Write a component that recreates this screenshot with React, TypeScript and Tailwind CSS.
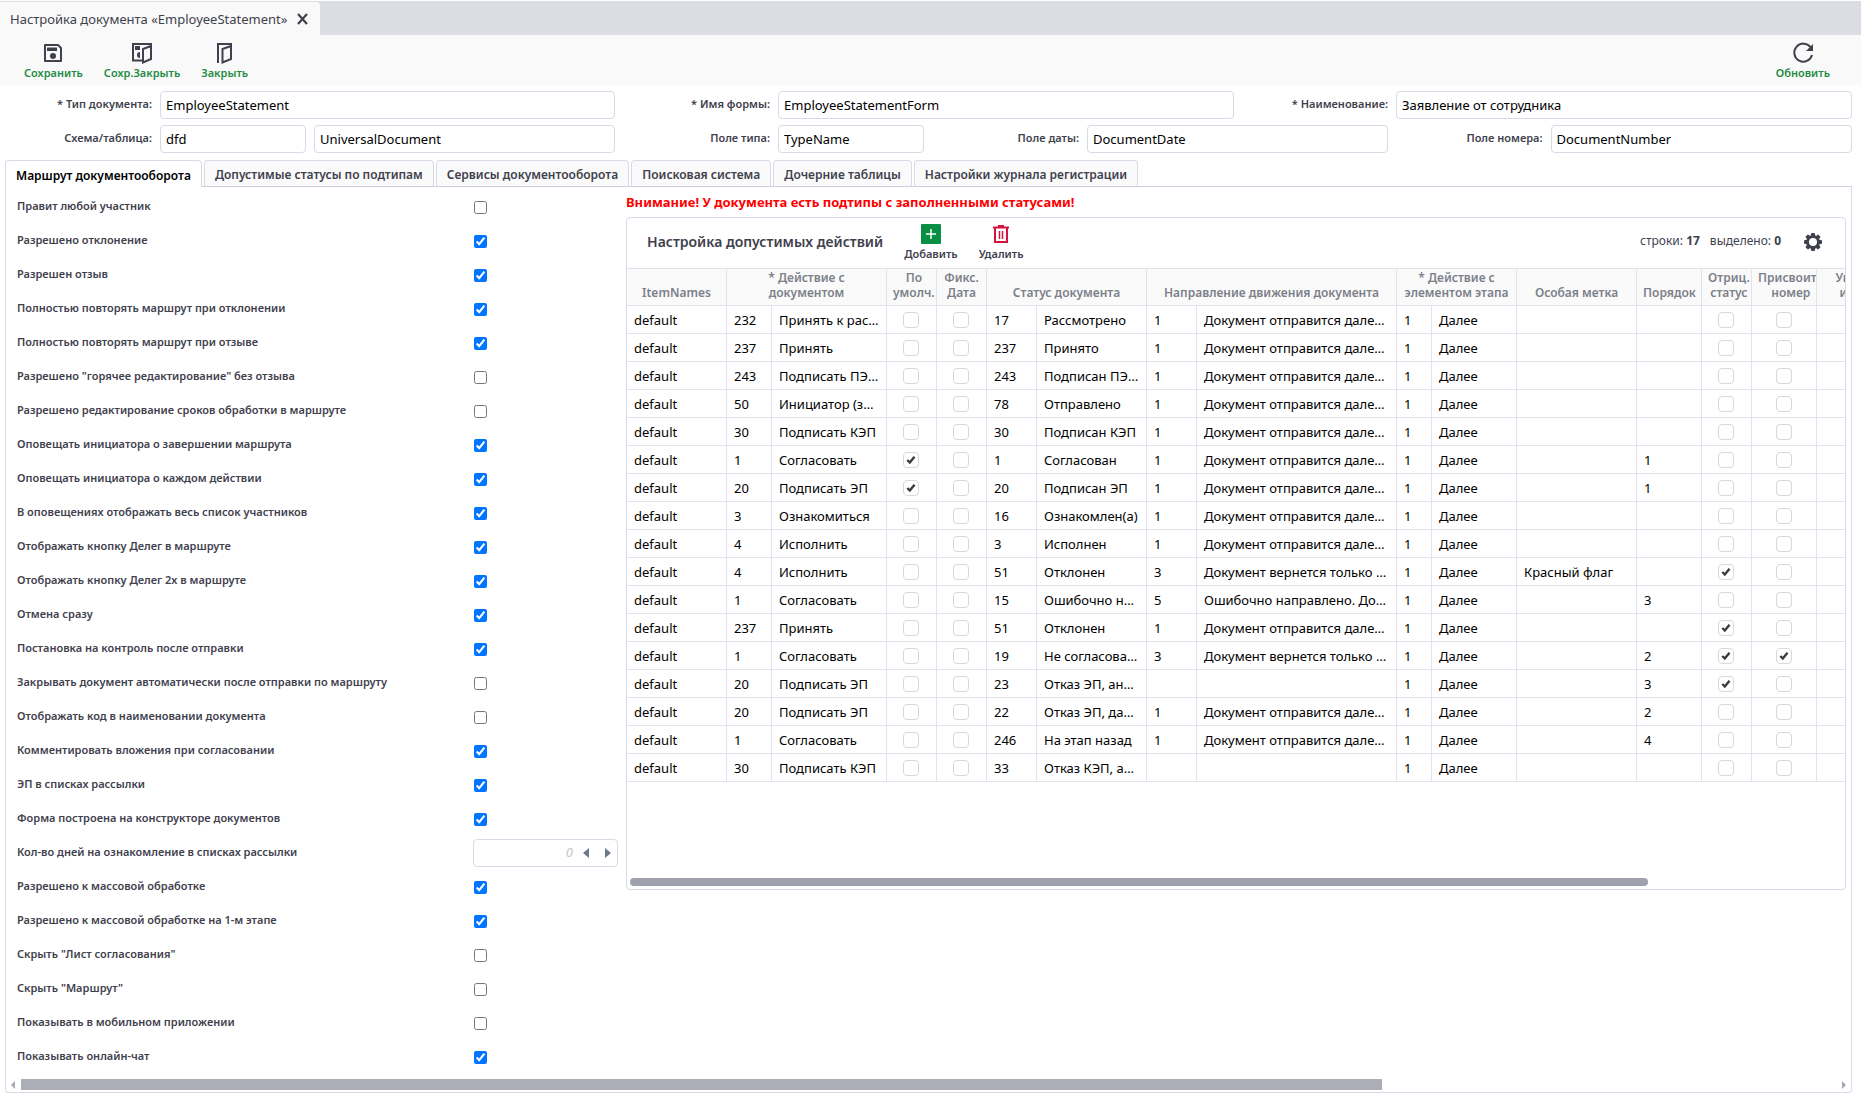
import React from "react";

const SETTINGS: { label: string; checked?: boolean; spinner?: boolean }[] = [
  { label: "Правит любой участник" },
  { label: "Разрешено отклонение", checked: true },
  { label: "Разрешен отзыв", checked: true },
  { label: "Полностью повторять маршрут при отклонении", checked: true },
  { label: "Полностью повторять маршрут при отзыве", checked: true },
  { label: 'Разрешено "горячее редактирование" без отзыва' },
  { label: "Разрешено редактирование сроков обработки в маршруте" },
  { label: "Оповещать инициатора о завершении маршрута", checked: true },
  { label: "Оповещать инициатора о каждом действии", checked: true },
  { label: "В оповещениях отображать весь список участников", checked: true },
  { label: "Отображать кнопку Делег в маршруте", checked: true },
  { label: "Отображать кнопку Делег 2х в маршруте", checked: true },
  { label: "Отмена сразу", checked: true },
  { label: "Постановка на контроль после отправки", checked: true },
  { label: "Закрывать документ автоматически после отправки по маршруту" },
  { label: "Отображать код в наименовании документа" },
  { label: "Комментировать вложения при согласовании", checked: true },
  { label: "ЭП в списках рассылки", checked: true },
  { label: "Форма построена на конструкторе документов", checked: true },
  { label: "Кол-во дней на ознакомление в списках рассылки", spinner: true },
  { label: "Разрешено к массовой обработке", checked: true },
  { label: "Разрешено к массовой обработке на 1-м этапе", checked: true },
  { label: 'Скрыть "Лист согласования"' },
  { label: 'Скрыть "Маршрут"' },
  { label: "Показывать в мобильном приложении" },
  { label: "Показывать онлайн-чат", checked: true },
];

const FORWARD = "Документ отправится далее по маршруту";
const BACK = "Документ вернется только инициатору";

type Row = {
  action: [string, string];
  byDefault?: boolean;
  status: [string, string];
  direction: [string, string];
  mark?: string;
  order?: string;
  negative?: boolean;
  number?: boolean;
};

const ROWS: Row[] = [
  { action: ["232", "Принять к рассмотрению"], status: ["17", "Рассмотрено"], direction: ["1", FORWARD] },
  { action: ["237", "Принять"], status: ["237", "Принято"], direction: ["1", FORWARD] },
  { action: ["243", "Подписать ПЭП (СМС)"], status: ["243", "Подписан ПЭП (СМС)"], direction: ["1", FORWARD] },
  { action: ["50", "Инициатор (заявитель)"], status: ["78", "Отправлено"], direction: ["1", FORWARD] },
  { action: ["30", "Подписать КЭП"], status: ["30", "Подписан КЭП"], direction: ["1", FORWARD] },
  { action: ["1", "Согласовать"], byDefault: true, status: ["1", "Согласован"], direction: ["1", FORWARD], order: "1" },
  { action: ["20", "Подписать ЭП"], byDefault: true, status: ["20", "Подписан ЭП"], direction: ["1", FORWARD], order: "1" },
  { action: ["3", "Ознакомиться"], status: ["16", "Ознакомлен(а)"], direction: ["1", FORWARD] },
  { action: ["4", "Исполнить"], status: ["3", "Исполнен"], direction: ["1", FORWARD] },
  { action: ["4", "Исполнить"], status: ["51", "Отклонен"], direction: ["3", BACK], mark: "Красный флаг", negative: true },
  { action: ["1", "Согласовать"], status: ["15", "Ошибочно направлено"], direction: ["5", "Ошибочно направлено. Документ вернется"], order: "3" },
  { action: ["237", "Принять"], status: ["51", "Отклонен"], direction: ["1", FORWARD], negative: true },
  { action: ["1", "Согласовать"], status: ["19", "Не согласовано"], direction: ["3", BACK], order: "2", negative: true, number: true },
  { action: ["20", "Подписать ЭП"], status: ["23", "Отказ ЭП, аннулирован"], direction: ["", ""], order: "3", negative: true },
  { action: ["20", "Подписать ЭП"], status: ["22", "Отказ ЭП, далее"], direction: ["1", FORWARD], order: "2" },
  { action: ["1", "Согласовать"], status: ["246", "На этап назад"], direction: ["1", FORWARD], order: "4" },
  { action: ["30", "Подписать КЭП"], status: ["33", "Отказ КЭП, аннулирован"], direction: ["", ""] },
];

const TABS = [
  "Маршрут документооборота",
  "Допустимые статусы по подтипам",
  "Сервисы документооборота",
  "Поисковая система",
  "Дочерние таблицы",
  "Настройки журнала регистрации",
];

const TEETH = [0, 45, 90, 135, 180, 225, 270, 315];

function SaveIcon() {
  return (
    <svg width="18" height="20" viewBox="0 0 18 20" fill="none">
      <path d="M1 2h13l3 3v13H1z" stroke="#3f414d" strokeWidth="2" strokeLinejoin="round" />
      <path d="M3 4.500h10v3.500H3z" fill="#3f414d" />
      <circle cx="9" cy="13" r="3" fill="#3f414d" />
    </svg>
  );
}

function SaveCloseIcon() {
  return (
    <svg width="20" height="22" viewBox="0 0 20 22" fill="none">
      <path d="M10 18.500H1V2h18v3" stroke="#3f414d" strokeWidth="2" />
      <path d="M3 4h5v4H3zM8 10v6a3 3 0 0 1 0-6z" fill="#3f414d" />
      <path d="M11 7l8-3v13l-8 3.500z" stroke="#3f414d" strokeWidth="2" />
    </svg>
  );
}

function DoorIcon() {
  return (
    <svg width="15" height="22" viewBox="0 0 15 22" fill="none">
      <path d="M1 21V2h13v3" stroke="#3f414d" strokeWidth="2" />
      <path d="M5.500 7l8.500-3v13l-8.500 3.500z" stroke="#3f414d" strokeWidth="2" />
    </svg>
  );
}

function RefreshIcon() {
  return (
    <svg width="22" height="22" viewBox="0 0 22 22" fill="none">
      <path d="M18.500 5.200A9 9 0 1 0 20 13" stroke="#3f414d" strokeWidth="2" />
      <path d="M21 2v7h-7z" fill="#3f414d" />
    </svg>
  );
}

function GearIcon() {
  return (
    <svg width="18" height="18" viewBox="0 0 18 18">
      <circle cx="9" cy="9" r="5.500" fill="none" stroke="#3f414d" strokeWidth="3" />
      {TEETH.map((a) => (
        <rect key={a} x="7" y="0" width="4" height="4" rx="1" fill="#3f414d" transform={`rotate(${a} 9 9)`} />
      ))}
    </svg>
  );
}

function ToolButton({ icon, label, green }: { icon: React.ReactNode; label: string; green?: boolean }) {
  return (
    <button className="flex flex-col items-center">
      <span className="flex h-6 items-center">{icon}</span>
      <span className={green ? "text-[11px] leading-4 font-semibold text-[#1f8b43]" : "text-[11px] leading-4 font-semibold text-[#3f414d]"}>
        {label}
      </span>
    </button>
  );
}

function Field({ id, label, value, className }: { id: string; label?: string; value: string; className: string }) {
  return (
    <div className={className}>
      {label && (
        <label htmlFor={id} className="w-40 shrink-0 pr-2 pb-0.5 text-right text-[11px] font-semibold">
          {label}
        </label>
      )}
      <input
        id={id}
        aria-label={label ?? "Таблица"}
        defaultValue={value}
        className="h-7 w-full min-w-0 rounded border border-[#d9d9e8] bg-white px-[5px] text-[13px] text-black outline-none"
      />
    </div>
  );
}

function Head({ children, span }: { children: React.ReactNode; span?: number }) {
  return (
    <th
      colSpan={span}
      className="h-[37px] overflow-hidden border-r border-b border-[#e2e3ec] bg-[#fafafa] px-1.5 pb-[5px] align-bottom text-xs leading-[15px] font-semibold whitespace-nowrap text-[#7c808a]"
    >
      <div className="w-max min-w-full text-center">{children}</div>
    </th>
  );
}

function Cell({ children }: { children?: React.ReactNode }) {
  return (
    <td className="h-7 truncate border-r border-b border-[#e2e3ec] px-[7px] text-[13px] leading-5 text-black">{children}</td>
  );
}

function CheckCell({ checked, label }: { checked?: boolean; label: string }) {
  return (
    <td className="h-7 border-r border-b border-[#e2e3ec] pr-px">
      <span className="mx-auto grid size-4 place-items-center">
        <input
          type="checkbox"
          aria-label={label}
          defaultChecked={checked}
          className="peer col-start-1 row-start-1 size-4 appearance-none rounded border border-[#d5dae0] bg-white"
        />
        <svg
          width="10"
          height="10"
          viewBox="0 0 10 10"
          className="pointer-events-none invisible col-start-1 row-start-1 peer-checked:visible"
        >
          <path d="M1.300 5l2.500 2.500L8.500 1.800" fill="none" stroke="#3c3c3c" strokeWidth="2.400" />
        </svg>
      </span>
    </td>
  );
}

export default function App() {
  return (
    <div className="flex min-h-screen flex-col bg-white pt-px font-['Noto_Sans',sans-serif] text-[#3f414d]">
      <div className="flex h-[34px] bg-[#dadde2]">
        <div className="mt-px flex items-center gap-2.5 rounded-tr bg-[#f9f9f9] pr-3 pl-2.5">
          <span className="text-[13px] leading-5">Настройка документа «EmployeeStatement»</span>
          <button aria-label="Закрыть вкладку">
            <svg width="11" height="12" viewBox="0 0 11 12">
              <path d="M1 1l9 10M10 1L1 11" stroke="#3f414d" strokeWidth="2.200" />
            </svg>
          </button>
        </div>
      </div>
      <div className="flex h-[50px] items-start justify-between bg-[#f9f9f9] pt-1.5 pr-[31px] pl-6">
        <div className="flex gap-[21px]">
          <ToolButton icon={<SaveIcon />} label="Сохранить" green />
          <ToolButton icon={<SaveCloseIcon />} label="Сохр.Закрыть" green />
          <ToolButton icon={<DoorIcon />} label="Закрыть" green />
        </div>
        <ToolButton icon={<RefreshIcon />} label="Обновить" green />
      </div>
      <form className="grid grid-cols-12 gap-y-1.5 pt-1.5 pr-[7px]">
        <Field id="type" label="* Тип документа:" value="EmployeeStatement" className="col-span-4 flex items-center pr-[3px]" />
        <Field id="form" label="* Имя формы:" value="EmployeeStatementForm" className="col-span-4 flex items-center pr-0.5" />
        <Field id="name" label="* Наименование:" value="Заявление от сотрудника" className="col-span-4 flex items-center pr-0.5" />
        <Field id="schema" label="Схема/таблица:" value="dfd" className="col-span-2 flex items-center pr-[3px]" />
        <Field id="table" value="UniversalDocument" className="col-span-2 flex items-center pr-[3px] pl-[5px]" />
        <Field id="tname" label="Поле типа:" value="TypeName" className="col-span-2 flex items-center pr-[3px]" />
        <Field id="tdate" label="Поле даты:" value="DocumentDate" className="col-span-3 flex items-center pr-[3px]" />
        <Field id="tnum" label="Поле номера:" value="DocumentNumber" className="col-span-3 flex items-center pr-0.5" />
      </form>
      <div className="mt-[7px] mr-[9px] ml-[5px] flex gap-0.5 border-b border-[#c8cfdd]" role="tablist">
        {TABS.map((tab, i) => (
          <button
            key={tab}
            role="tab"
            aria-selected={i === 0}
            className={
              i === 0
                ? "-mb-px h-[27px] rounded-t border border-b-0 border-[#d9d9e8] bg-white px-2.5 pt-1 text-xs leading-5 font-semibold text-black"
                : "h-[26px] rounded-t border border-b-0 border-[#d9d9e8] bg-[#fafafa] px-2.5 pt-0.5 text-xs leading-5 font-semibold"
            }
          >
            {tab}
          </button>
        ))}
      </div>
      <div className="mr-[9px] mb-1 ml-[5px] flex grow flex-col rounded-b border border-t-0 border-[#d9d9e8]">
        <div className="flex grow items-start">
          <div className="w-[620px] shrink-0 pt-[3px] pl-[11px]">
            {SETTINGS.map((s, i) => (
              <div key={s.label} className="flex h-[34px] items-center">
                <label htmlFor={"setting" + i} className="w-[456px] shrink-0 pb-0.5 text-[11px] leading-5 font-semibold">
                  {s.label}
                </label>
                {s.spinner ? (
                  <div className="flex h-7 w-[145px] items-center rounded border border-[#d9d9e8]">
                    <input
                      id={"setting" + i}
                      placeholder="0"
                      className="w-full min-w-0 pr-2 text-right text-[13px] italic outline-none placeholder:text-[#c3c8cf]"
                    />
                    <button aria-label="Меньше" className="px-0.5">
                      <svg width="6" height="10" viewBox="0 0 6 10">
                        <path d="M6 0v10L0 5z" fill="#6a7a8c" />
                      </svg>
                    </button>
                    <button aria-label="Больше" className="mr-1 ml-3 px-0.5">
                      <svg width="6" height="10" viewBox="0 0 6 10">
                        <path d="M0 0v10l6-5z" fill="#6a7a8c" />
                      </svg>
                    </button>
                  </div>
                ) : (
                  <input id={"setting" + i} type="checkbox" defaultChecked={s.checked} className="ml-px size-[13px]" />
                )}
              </div>
            ))}
          </div>
          <div className="min-w-0 grow pt-[5px] pr-[5px]">
            <p className="text-[13px] leading-5 font-bold text-[#fe0000]">
              Внимание! У документа есть подтипы с заполненными статусами!
            </p>
            <section className="mt-[5px] flex h-[673px] flex-col overflow-hidden rounded border border-[#d9d9e8]">
              <header className="flex h-[51px] shrink-0 items-center border-b border-[#e2e3ec] pr-[23px] pb-0.5 pl-5">
                <h2 className="mr-[21px] text-sm leading-5 font-semibold">Настройка допустимых действий</h2>
                <div className="flex gap-[21px]">
                  <ToolButton
                    icon={
                      <svg width="20" height="20" viewBox="0 0 20 20">
                        <rect width="20" height="20" rx="1" fill="#088f44" />
                        <path d="M10 5v10M5 10h10" stroke="#fff" strokeWidth="1.500" />
                      </svg>
                    }
                    label="Добавить"
                  />
                  <ToolButton
                    icon={
                      <svg width="16" height="18" viewBox="0 0 16 18" fill="none" stroke="#d2143c">
                        <path d="M2 3v14h12V3" strokeWidth="2" />
                        <path d="M0 2.500h16M5 1h6" strokeWidth="2" />
                        <path d="M6.500 6v8M9.500 6v8" strokeWidth="1.500" />
                      </svg>
                    }
                    label="Удалить"
                  />
                </div>
                <div className="ml-auto flex gap-2.5 pb-0.5 text-xs leading-5">
                  <span>
                    строки: <b>17</b>
                  </span>
                  <span>
                    выделено: <b>0</b>
                  </span>
                </div>
                <button aria-label="Настройки таблицы" className="ml-[23px]">
                  <GearIcon />
                </button>
              </header>
              <div className="grow overflow-hidden">
                <table className="w-[1260px] table-fixed border-separate border-spacing-0">
                  <colgroup>
                    <col className="w-[100px]" />
                    <col className="w-[45px]" />
                    <col className="w-[115px]" />
                    <col className="w-[50px]" />
                    <col className="w-[50px]" />
                    <col className="w-[50px]" />
                    <col className="w-[110px]" />
                    <col className="w-[50px]" />
                    <col className="w-[200px]" />
                    <col className="w-[35px]" />
                    <col className="w-[85px]" />
                    <col className="w-[120px]" />
                    <col className="w-[65px]" />
                    <col className="w-[50px]" />
                    <col className="w-[65px]" />
                    <col className="w-[70px]" />
                  </colgroup>
                  <thead>
                    <tr>
                      <Head>ItemNames</Head>
                      <Head span={2}>
                        * Действие с<br />
                        документом
                      </Head>
                      <Head>
                        По
                        <br />
                        умолч.
                      </Head>
                      <Head>
                        Фикс.
                        <br />
                        Дата
                      </Head>
                      <Head span={2}>Статус документа</Head>
                      <Head span={2}>Направление движения документа</Head>
                      <Head span={2}>
                        * Действие с<br />
                        элементом этапа
                      </Head>
                      <Head>Особая метка</Head>
                      <Head>Порядок</Head>
                      <Head>
                        Отриц.
                        <br />
                        статус
                      </Head>
                      <Head>
                        Присвоить
                        <br />
                        номер
                      </Head>
                      <Head>
                        Увед.
                        <br />
                        иск.
                      </Head>
                    </tr>
                  </thead>
                  <tbody>
                    {ROWS.map((r, i) => (
                      <tr key={i}>
                        <Cell>default</Cell>
                        <Cell>{r.action[0]}</Cell>
                        <Cell>{r.action[1]}</Cell>
                        <CheckCell checked={r.byDefault} label="По умолчанию" />
                        <CheckCell label="Фиксированная дата" />
                        <Cell>{r.status[0]}</Cell>
                        <Cell>{r.status[1]}</Cell>
                        <Cell>{r.direction[0]}</Cell>
                        <Cell>{r.direction[1]}</Cell>
                        <Cell>1</Cell>
                        <Cell>Далее</Cell>
                        <Cell>{r.mark}</Cell>
                        <Cell>{r.order}</Cell>
                        <CheckCell checked={r.negative} label="Отрицательный статус" />
                        <CheckCell checked={r.number} label="Присвоить номер" />
                        <Cell />
                      </tr>
                    ))}
                  </tbody>
                </table>
              </div>
              <div className="px-[3px] pb-[3px]">
                <div className="h-2 w-[84%] rounded-full bg-[#9fa1ac]" />
              </div>
            </section>
          </div>
        </div>
        <div className="mb-0.5 flex items-center px-[5px]">
          <svg width="4" height="8" viewBox="0 0 4 8">
            <path d="M4 0v8L0 4z" fill="#a5a8b0" />
          </svg>
          <div className="mx-1.5 h-[11px] grow">
            <div className="h-full w-[75%] bg-[#abaeb6]" />
          </div>
          <svg width="4" height="8" viewBox="0 0 4 8">
            <path d="M0 0v8l4-4z" fill="#a5a8b0" />
          </svg>
        </div>
      </div>
    </div>
  );
}
